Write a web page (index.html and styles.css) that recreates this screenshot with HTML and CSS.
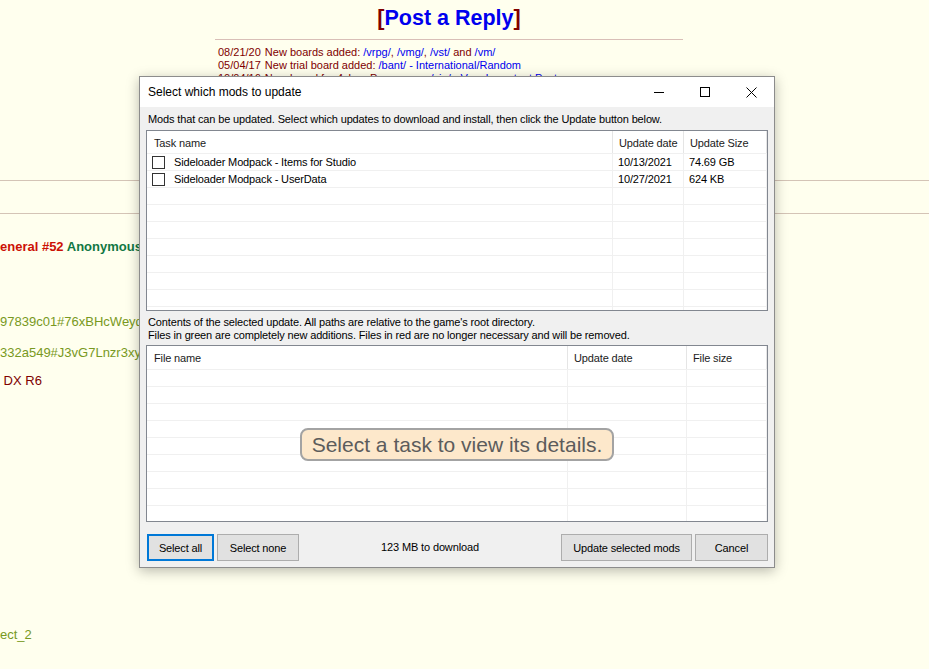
FILE: index.html
```html
<!DOCTYPE html>
<html lang="en">
<head>
  <meta charset="UTF-8">
  <meta name="viewport" content="width=device-width, initial-scale=1.0">
  <title>Select which mods to update</title>
  <link rel="stylesheet" href="styles.css">
</head>
<body>

  <div class="board-top">
    <div class="post-reply">[<a href="#">Post a Reply</a>]</div>
    <div class="news-rule"></div>
    <table class="news">
      <tr><td class="news-date">08/21/20</td><td>New boards added: <a href="#">/vrpg/</a>, <a href="#">/vmg/</a>, <a href="#">/vst/</a> and <a href="#">/vm/</a></td></tr>
      <tr><td class="news-date">05/04/17</td><td>New trial board added: <a href="#">/bant/ - International/Random</a></td></tr>
      <tr><td class="news-date">10/04/16</td><td>New board for 4chan Pass users: <a href="#">/vip/ - Very Important Posts</a></td></tr>
    </table>
  </div>

  <div class="rule rule-first"></div>
  <div class="rule rule-second"></div>

  <div class="subject-line"><span class="subject">eneral #52</span> <span class="name">Anonymous</span></div>
  <div class="quote quote-first">97839c01#76xBHcWeyd</div>
  <div class="quote quote-second">332a549#J3vG7Lnzr3xy</div>
  <div class="post-text">&nbsp;DX R6</div>
  <div class="quote quote-last">ect_2</div>

  <div class="dialog">
    <div class="titlebar">
      <span class="title">Select which mods to update</span>
      <span class="cap-btn">
        <svg width="10" height="10" viewBox="0 0 10 10"><path d="M0 5.5h10" stroke="#000" stroke-width="1"/></svg>
      </span>
      <span class="cap-btn">
        <svg width="10" height="10" viewBox="0 0 10 10"><rect x="0.5" y="0.5" width="9" height="9" fill="none" stroke="#000" stroke-width="1"/></svg>
      </span>
      <span class="cap-btn">
        <svg width="11" height="11" viewBox="0 0 11 11"><path d="M0.5 0.5L10.5 10.5M10.5 0.5L0.5 10.5" stroke="#000" stroke-width="1"/></svg>
      </span>
    </div>

    <div class="client">
      <p class="label">Mods that can be updated. Select which updates to download and install, then click the Update button below.</p>

      <div class="listview list-tasks">
        <table>
          <thead>
            <tr>
              <th class="col-task">Task name</th>
              <th class="col-date">Update date</th>
              <th class="col-size">Update Size</th>
            </tr>
          </thead>
          <tbody id="task-rows"></tbody>
        </table>
      </div>

      <p class="label label-second">Contents of the selected update. All paths are relative to the game's root directory.<br>Files in green are completely new additions. Files in red are no longer necessary and will be removed.</p>

      <div class="listview list-files">
        <table>
          <thead>
            <tr>
              <th class="col-file">File name</th>
              <th class="col-fdate">Update date</th>
              <th class="col-fsize">File size</th>
            </tr>
          </thead>
          <tbody id="file-rows"></tbody>
        </table>
        <div class="empty-note">
          <span class="empty-box">Select a task to view its details.</span>
        </div>
      </div>

      <div class="button-row">
        <button class="btn btn-focus btn-all">Select all</button>
        <button class="btn btn-none">Select none</button>
        <span class="download-size">123 MB to download</span>
        <button class="btn btn-update">Update selected mods</button>
        <button class="btn btn-cancel">Cancel</button>
      </div>
    </div>
  </div>

  <script>
    const tasks = [
      { name: 'Sideloader Modpack - Items for Studio', date: '10/13/2021', size: '74.69 GB' },
      { name: 'Sideloader Modpack - UserData', date: '10/27/2021', size: '624 KB' }
    ];

    function renderRows(id, items, total) {
      const tbody = document.getElementById(id);
      for (let i = 0; i < total; i++) {
        const row = document.createElement('tr');
        const item = items[i];
        if (item) {
          row.innerHTML = `
            <td><span class="check"></span>${item.name}</td>
            <td>${item.date}</td>
            <td>${item.size}</td>
          `;
        } else {
          row.innerHTML = '<td></td><td></td><td></td>';
        }
        tbody.appendChild(row);
      }
    }

    renderRows('task-rows', tasks, 10);
    renderRows('file-rows', [], 10);
  </script>

</body>
</html>
```

FILE: styles.css
```css
body {
  margin: 0;
  background-color: #ffffee;
  color: #800000;
  font-family: "Liberation Sans", Arial, sans-serif;
  font-size: 13px;
  overflow: hidden;
}

a {
  color: #0000ee;
  text-decoration: none;
}

.board-top {
  width: 898px;
  text-align: center;
}

.post-reply {
  margin-top: 6px;
  font-size: 21.5px;
  font-weight: bold;
  line-height: 24px;
}

.news-rule {
  width: 468px;
  margin: 9px auto 0;
  border-top: 1px solid #d9bfb7;
}

.news {
  width: 468px;
  margin: 6px auto 0;
  border-collapse: collapse;
  text-align: left;
  font-size: 11px;
  line-height: 13px;
}

.news td {
  padding: 0;
  white-space: nowrap;
}

.news td:last-child {
  width: 100%;
}

.news .news-date {
  padding: 0 4px 0 3px;
}

.rule {
  border-top: 1px solid #d4c4b6;
}

.rule-first {
  margin-top: 95px;
}

.rule-second {
  margin-top: 32px;
}

.subject-line {
  margin-top: 25px;
  line-height: 16px;
  font-weight: bold;
  white-space: nowrap;
}

.subject {
  color: #cc1105;
}

.name {
  color: #117743;
}

.quote,
.post-text {
  line-height: 16px;
  white-space: nowrap;
}

.quote {
  color: #789922;
}

.quote-first {
  margin-top: 59px;
}

.quote-second {
  margin-top: 15px;
}

.post-text {
  margin-top: 12px;
}

.quote-last {
  margin-top: 238px;
}

/* dialog window */

.dialog {
  position: absolute;
  left: 139px;
  top: 76px;
  width: 636px;
  box-sizing: border-box;
  border: 1px solid #8c8c8c;
  background-color: #f0f0f0;
  color: #000;
  box-shadow: 0 3px 12px rgba(0, 0, 0, 0.28);
  font-size: 11px;
  letter-spacing: -0.14px;
}

.titlebar {
  display: flex;
  align-items: center;
  height: 30px;
  background-color: #fff;
  letter-spacing: 0;
}

.title {
  flex: 1;
  padding-left: 8px;
  font-size: 12px;
}

.cap-btn {
  display: flex;
  align-items: center;
  justify-content: center;
  width: 46px;
  height: 30px;
}

.client {
  padding: 6px;
}

.label {
  margin: 0;
  padding-left: 2px;
  line-height: 13px;
  white-space: nowrap;
}

.label-second {
  margin-top: 5px;
}

.listview {
  position: relative;
  box-sizing: border-box;
  margin-top: 4px;
  height: 181px;
  border: 1px solid #828790;
  background-color: #fff;
  overflow: hidden;
}

.list-files {
  margin-top: 3px;
  height: 177px;
}

.listview table {
  width: 620px;
  table-layout: fixed;
  border-collapse: separate;
  border-spacing: 0;
}

.listview th,
.listview td {
  box-sizing: border-box;
  padding: 0 5px;
  text-align: left;
  font-weight: normal;
  white-space: nowrap;
  overflow: hidden;
}

.listview th {
  height: 22px;
  padding: 1px 6px 0;
  border-right: 1px solid #e5e5e5;
  color: #1b1b1b;
}

.list-files th {
  height: 23px;
}

.listview th:first-child {
  padding-left: 7px;
}

.listview td {
  height: 17px;
  line-height: 16px;
  border-top: 1px solid #f0f0f0;
  border-right: 1px solid #f0f0f0;
}

.col-task { width: 466px; }
.col-date { width: 71px; }
.col-size { width: 83px; }
.col-file { width: 421px; }
.col-fdate { width: 119px; }
.col-fsize { width: 80px; }

.check {
  display: inline-block;
  box-sizing: border-box;
  width: 13px;
  height: 13px;
  margin: 0 9px 0 0;
  border: 1px solid #333;
  background-color: #fff;
  vertical-align: -3px;
}

.empty-note {
  position: absolute;
  left: 0;
  right: 0;
  top: 21px;
  bottom: 0;
  display: flex;
  align-items: center;
  justify-content: center;
}

.empty-box {
  padding: 3px 10px 3px;
  border: 2px solid #a3a3a3;
  border-radius: 8px;
  background-color: #fde8cb;
  color: #5c5c5c;
  font-size: 21px;
  line-height: 23px;
  letter-spacing: 0;
  white-space: nowrap;
}

.button-row {
  display: flex;
  gap: 3px;
  margin-top: 12px;
  padding-left: 1px;
  height: 27px;
}

.download-size {
  flex: 1;
  text-align: center;
  line-height: 27px;
}

.btn {
  box-sizing: border-box;
  height: 27px;
  padding: 0;
  border: 1px solid #adadad;
  background-color: #e1e1e1;
  color: #000;
  font-family: "Liberation Sans", Arial, sans-serif;
  font-size: 11px;
  letter-spacing: -0.14px;
}

.btn-focus {
  border: 2px solid #0078d7;
}

.btn-all { width: 67px; }
.btn-none { width: 82px; }
.btn-update { width: 131px; }
.btn-cancel { width: 73px; }
```
